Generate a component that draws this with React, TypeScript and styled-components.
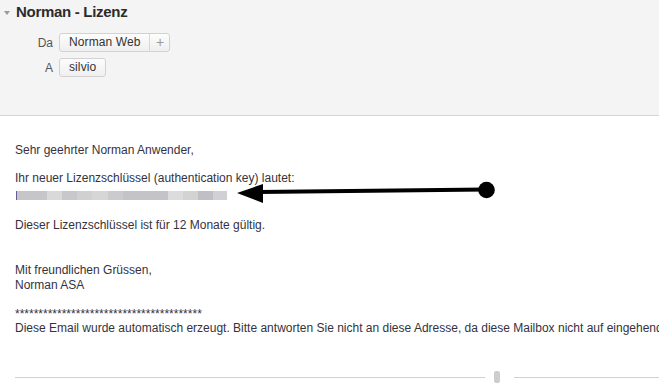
import styled, { createGlobalStyle } from "styled-components";

const GlobalStyle = createGlobalStyle`
  html, body {
    margin: 0;
    padding: 0;
    background: #ffffff;
  }
  body {
    font-family: "Liberation Sans", Arial, sans-serif;
    font-size: 12px;
    color: #333333;
  }
`;

const keySegments = [
  { w: 30, c: "#c6c6c8" },
  { w: 15, c: "#d9d9da" },
  { w: 15, c: "#c8c8cc" },
  { w: 15, c: "#d0d0d1" },
  { w: 16, c: "#d6d6d6" },
  { w: 15, c: "#cbcbcd" },
  { w: 45, c: "#c4c4c8" },
  { w: 15, c: "#dcdcdc" },
  { w: 15, c: "#d3d3d4" },
  { w: 15, c: "#bfbfc5" },
  { w: 14, c: "#d1d1d5" },
];

const Page = styled.div`
  position: relative;
  width: 659px;
  height: 387px;
  overflow: hidden;
`;

const Header = styled.header`
  background: #f4f4f4;
  border-bottom: 1px solid #d6d6d6;
  height: 116px;
  padding-top: 3px;
  box-sizing: border-box;
`;

const TitleRow = styled.div`
  display: flex;
  align-items: center;
  height: 18px;
`;

const Caret = styled.span`
  width: 0;
  height: 0;
  margin: 1px 6px 0 4px;
  border-left: 3.5px solid transparent;
  border-right: 3.5px solid transparent;
  border-top: 4px solid #9a9a9a;
`;

const Title = styled.h1`
  margin: 0;
  font-size: 15px;
  line-height: 18px;
  font-weight: bold;
  letter-spacing: -0.3px;
  color: #2b2b2b;
`;

const Fields = styled.div`
  display: grid;
  grid-template-columns: 53px auto;
  column-gap: 6px;
  row-gap: 6px;
  margin-top: 12px;
  justify-content: start;
  align-items: center;
`;

const Label = styled.span`
  text-align: right;
  color: #555555;
  font-size: 12px;
`;

const Chip = styled.span`
  display: inline-flex;
  align-items: stretch;
  justify-self: start;
  height: 19px;
  box-sizing: border-box;
  border: 1px solid #d2d2d2;
  border-radius: 3px;
  background: linear-gradient(#fdfdfd, #efefef);
  color: #333333;
  font-size: 12px;
  line-height: 17px;
`;

const ChipText = styled.span`
  padding: 0 9px 0 9px;
  letter-spacing: 0.1px;
`;

const ChipAdd = styled.span`
  width: 19px;
  border-left: 1px solid #d6d6d6;
  text-align: center;
  color: #9a9a9a;
  font-size: 14px;
  line-height: 16px;
`;

const Body = styled.main`
  padding: 27px 0 0 15px;
  white-space: nowrap;
  line-height: 15px;
  color: #34323d;
`;

const Line = styled.div<{ $mt?: number; $lh?: number }>`
  margin-top: ${(p) => p.$mt ?? 0}px;
  line-height: ${(p) => p.$lh ?? 15}px;
`;

const KeyRow = styled.div`
  display: flex;
  align-items: flex-start;
  height: 14px;
  padding-top: 5px;
  box-sizing: border-box;
`;

const Cursor = styled.span`
  width: 1px;
  height: 9px;
  margin-left: 1px;
  background: #6a5a9a;
`;

const KeyBlock = styled.span<{ $c: string }>`
  height: 9px;
  background: ${(p) => p.$c};
`;

const Footer = styled.footer`
  display: flex;
  align-items: center;
  margin-top: 36px;
  padding-left: 15px;
`;

const Rule = styled.span<{ $w?: number }>`
  height: 1px;
  background: #d0d0d0;
  ${(p) => (p.$w ? `width: ${p.$w}px;` : "flex: 1;")}
`;

const Handle = styled.span`
  width: 6px;
  height: 12px;
  margin: 0 14px 0 9px;
  border-radius: 2px;
  background: #cdcdcd;
`;

const Overlay = styled.svg`
  position: absolute;
  left: 0;
  top: 0;
  pointer-events: none;
`;

export default function App() {
  return (
    <Page>
      <GlobalStyle />
      <Header>
        <TitleRow>
          <Caret />
          <Title>Norman - Lizenz</Title>
        </TitleRow>
        <Fields>
          <Label>Da</Label>
          <Chip>
            <ChipText>Norman Web</ChipText>
            <ChipAdd>+</ChipAdd>
          </Chip>
          <Label>A</Label>
          <Chip>
            <ChipText>silvio</ChipText>
          </Chip>
        </Fields>
      </Header>
      <Body>
        <Line>Sehr geehrter Norman Anwender,</Line>
        <Line $mt={13}>Ihr neuer Lizenzschlüssel (authentication key) lautet:</Line>
        <KeyRow>
          <Cursor />
          {keySegments.map((s, i) => (
            <KeyBlock key={i} $c={s.c} style={{ width: s.w }} />
          ))}
        </KeyRow>
        <Line $mt={18}>Dieser Lizenzschlüssel ist für 12 Monate gültig.</Line>
        <Line $mt={30}>Mit freundlichen Grüssen,</Line>
        <Line>Norman ASA</Line>
        <Line $mt={14} $lh={14}>
          ****************************************
        </Line>
        <Line $lh={14}>
          Diese Email wurde automatisch erzeugt. Bitte antworten Sie nicht an
          diese Adresse, da diese Mailbox nicht auf eingehende Nachrichten
          überprüft wird.
        </Line>
      </Body>
      <Footer>
        <Rule $w={470} />
        <Handle />
        <Rule />
      </Footer>
      <Overlay width="659" height="387" viewBox="0 0 659 387">
        <line x1="258" y1="192" x2="486" y2="189.5" stroke="#000" strokeWidth="4" />
        <polygon points="237,193 263,184 263,203" fill="#000" />
        <circle cx="486.5" cy="190" r="8.3" fill="#000" />
      </Overlay>
    </Page>
  );
}
